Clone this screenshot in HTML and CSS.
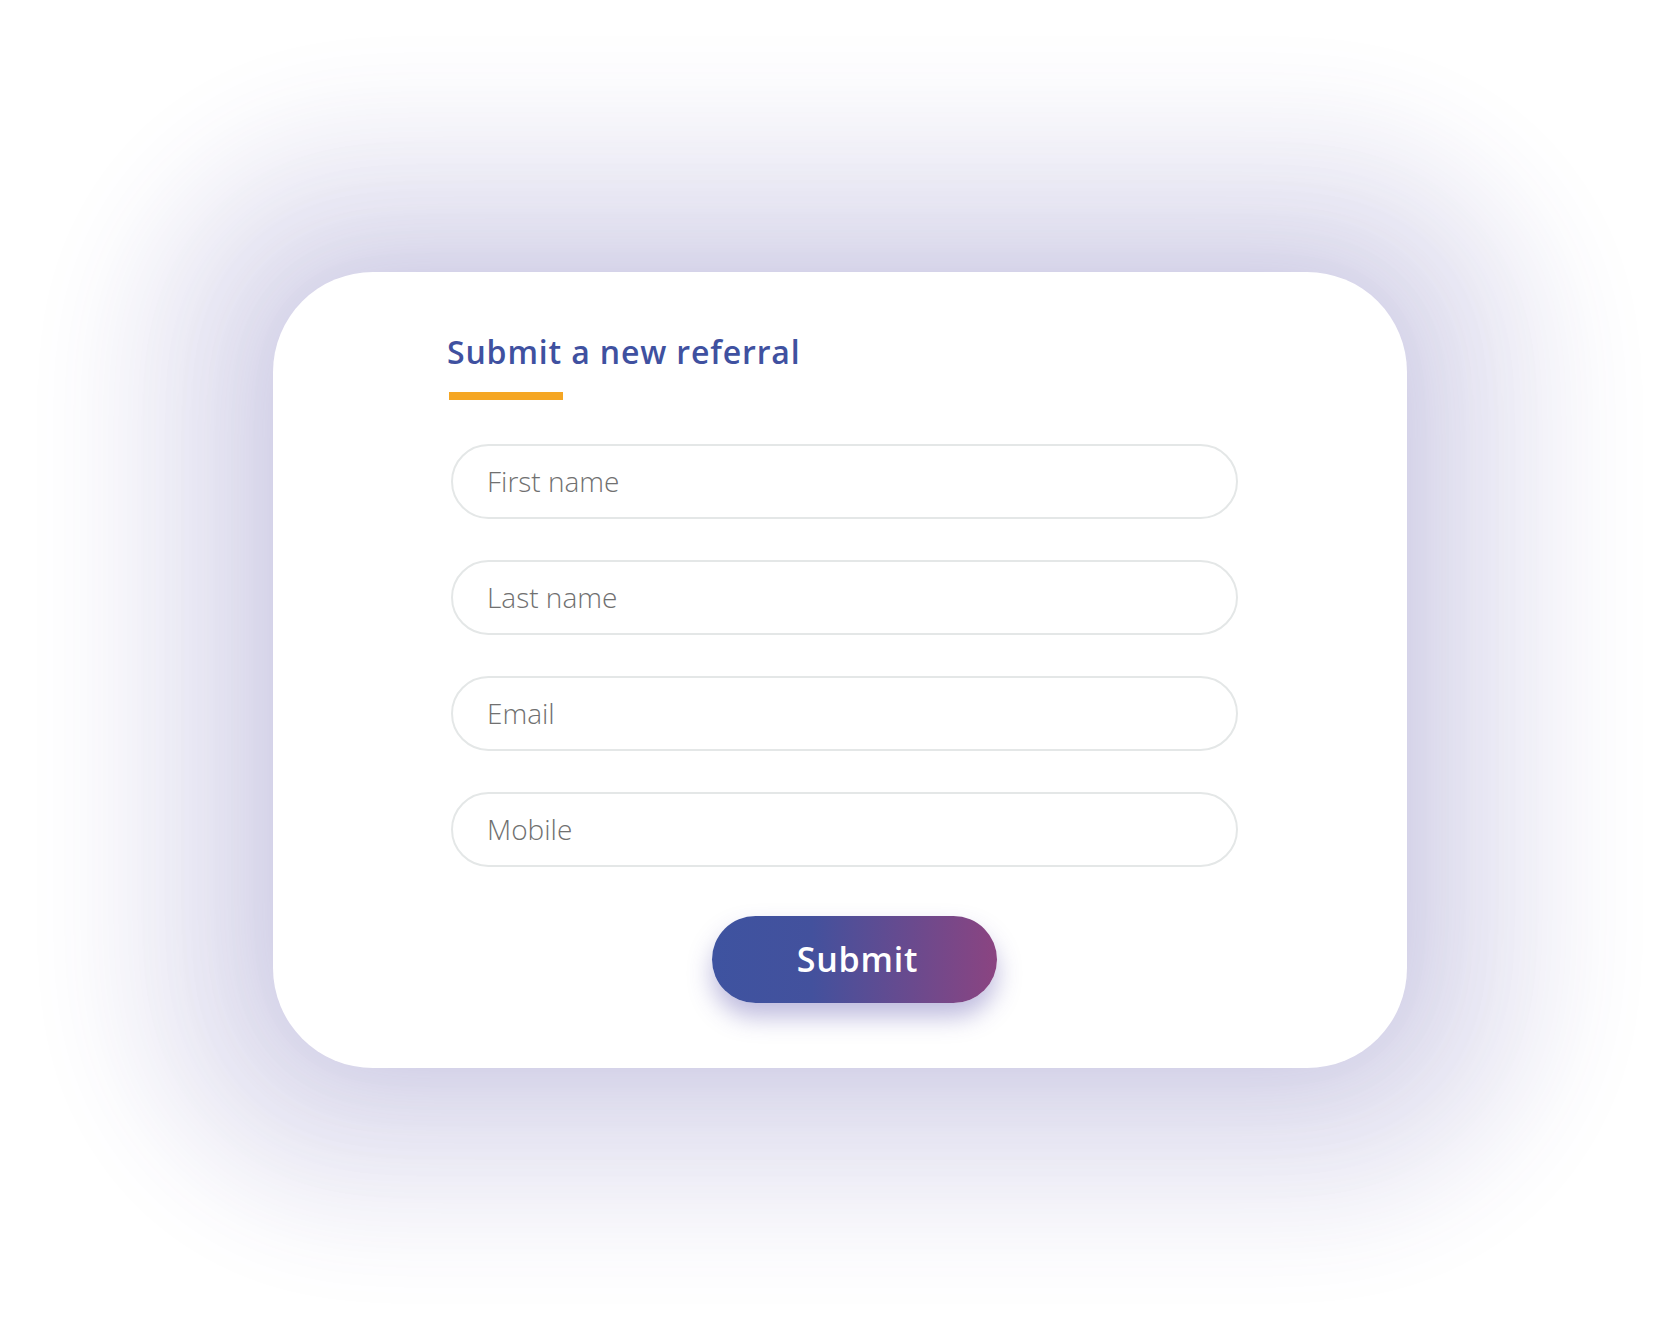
FILE: index.html
```html
<!DOCTYPE html>
<html lang="en">
<head>
  <meta charset="UTF-8" />
  <meta name="viewport" content="width=device-width, initial-scale=1.0"/>
  <title>Submit a new referral</title>
  <link rel="stylesheet" href="styles.css">
</head>
<body>

  <div class="card">
    <form class="referral-form">
      <h2>Submit a new referral</h2>
      <div class="underline"></div>

      <input type="text" name="firstName" placeholder="First name">
      <input type="text" name="lastName" placeholder="Last name">
      <input type="email" name="email" placeholder="Email">
      <input type="tel" name="mobile" placeholder="Mobile">

      <div class="actions">
        <button type="submit">Submit</button>
      </div>
    </form>
  </div>

</body>
</html>
```

FILE: styles.css
```css
html, body {
  margin: 0;
  height: 100%;
}
body {
  font-family: "Open Sans", sans-serif;
  background: #fff;
  display: flex;
  align-items: center;
  justify-content: center;
}
.card {
  box-sizing: border-box;
  width: 1134px;
  height: 796px;
  background: #fff;
  border-radius: 100px;
  /* soft lavender glow, built from smaller blurs */
  box-shadow:
    0 0 100px 0 rgba(68, 59, 153, 0.2),
    0 0 100px 75px rgba(68, 59, 153, 0.03),
    0 0 100px 150px rgba(68, 59, 153, 0.1);
  padding: 58px 169px 0 174px;
}
.referral-form {
  display: flex;
  flex-direction: column;
}
.referral-form h2 {
  margin: 0;
  font-size: 32px;
  font-weight: 600;
  letter-spacing: 0.85px;
  line-height: 1.362;
  color: #3f51a0;
}
.underline {
  width: 114px;
  height: 8px;
  background: #f5a623;
  margin: 18px 0 44px 2px;
}
.referral-form input {
  box-sizing: border-box;
  height: 75px;
  margin: 0 0 41px 4px;
  padding: 0 34px;
  border: 2px solid #e4e7e7;
  border-radius: 38px;
  font-family: "Open Sans", sans-serif;
  font-size: 28px;
  font-weight: 300;
  color: #555;
  outline: none;
}
.referral-form input::placeholder {
  color: #707070;
}
.actions {
  display: flex;
  justify-content: center;
  margin-top: 8px;
  padding-left: 24px;
}
.actions button {
  width: 285px;
  height: 87px;
  border: none;
  border-radius: 44px;
  background: linear-gradient(to right, #3e53a0 0%, #43519d 35%, #8b4481 100%);
  box-shadow: 0 14px 24px rgba(70, 60, 160, 0.35);
  color: #fff;
  font-family: "Open Sans", sans-serif;
  font-size: 34px;
  font-weight: 600;
  letter-spacing: 0.8px;
  padding: 0 0 0 6px;
  cursor: pointer;
}
```
